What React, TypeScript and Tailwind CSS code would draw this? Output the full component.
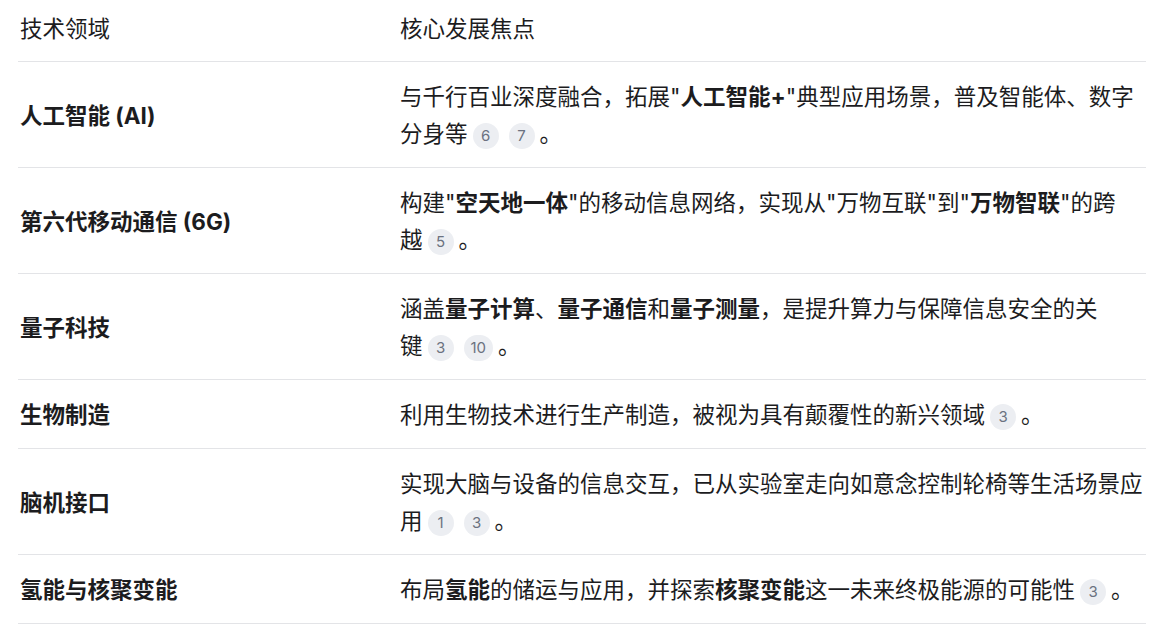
import React from "react";

const Cite = ({ n }: { n: string }) => (
  <span className="mx-[5px] inline-flex h-[26px] min-w-[26px] items-center justify-center rounded-full bg-[#eceef2] px-[7px] align-[1px] text-[15px] leading-none text-[#6b7280]">
    {n}
  </span>
);

type Row = { name: string; body: React.ReactNode };

const rows: Row[] = [
  {
    name: "人工智能 (AI)",
    body: (
      <>
        与千行百业深度融合，拓展"<b className="font-bold">人工智能+</b>"典型应用场景，普及智能体、数字分身
        <span className="whitespace-nowrap">
          等<Cite n="6" />
          <Cite n="7" />。
        </span>
      </>
    ),
  },
  {
    name: "第六代移动通信 (6G)",
    body: (
      <>
        构建"<b className="font-bold">空天地一体</b>"的移动信息网络，实现从"万物互联"到"<b className="font-bold">万物智联</b>"的跨
        <span className="whitespace-nowrap">
          越<Cite n="5" />。
        </span>
      </>
    ),
  },
  {
    name: "量子科技",
    body: (
      <>
        涵盖<b className="font-bold">量子计算</b>、<b className="font-bold">量子通信</b>和<b className="font-bold">量子测量</b>，是提升算力与保障信息安全的关
        <span className="whitespace-nowrap">
          键<Cite n="3" />
          <Cite n="10" />。
        </span>
      </>
    ),
  },
  {
    name: "生物制造",
    body: (
      <>
        利用生物技术进行生产制造，被视为具有颠覆性的新兴领
        <span className="whitespace-nowrap">
          域<Cite n="3" />。
        </span>
      </>
    ),
  },
  {
    name: "脑机接口",
    body: (
      <>
        实现大脑与设备的信息交互，已从实验室走向如意念控制轮椅等生活场景应
        <span className="whitespace-nowrap">
          用<Cite n="1" />
          <Cite n="3" />。
        </span>
      </>
    ),
  },
  {
    name: "氢能与核聚变能",
    body: (
      <>
        布局<b className="font-bold">氢能</b>的储运与应用，并探索<b className="font-bold">核聚变能</b>这一未来终极能源的可能
        <span className="whitespace-nowrap">
          性<Cite n="3" />。
        </span>
      </>
    ),
  },
];

export default function App() {
  return (
    <div
      className="min-h-[624px] bg-white pl-[18px] text-[#1c1c1e]"
      style={{ fontFamily: 'Inter, "Noto Sans CJK SC", sans-serif' }}
    >
      <table className="w-[1128px] border-collapse text-[22.5px] leading-[37px]">
        <thead>
          <tr className="border-b border-[#e3e4e7]">
            <th className="w-[382px] pt-[10px] pb-[14px] pl-[2px] text-left font-normal">技术领域</th>
            <th className="pt-[10px] pb-[14px] text-left font-normal">核心发展焦点</th>
          </tr>
        </thead>
        <tbody>
          {rows.map((r) => (
            <tr key={r.name} className="border-b border-[#e3e4e7]">
              <td className="pt-[16px] pb-[15px] pl-[2px] align-middle font-bold">{r.name}</td>
              <td className="pt-[16px] pb-[15px] align-middle">{r.body}</td>
            </tr>
          ))}
        </tbody>
      </table>
    </div>
  );
}
